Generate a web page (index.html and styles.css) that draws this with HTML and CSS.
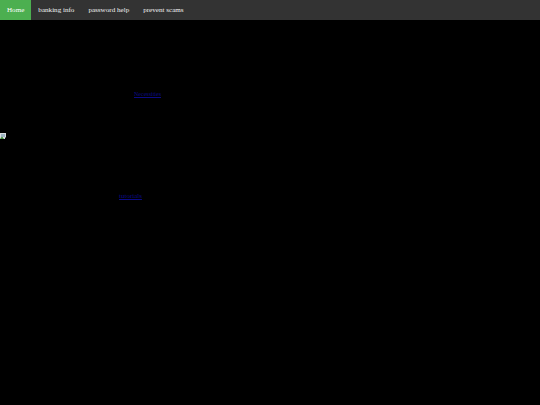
FILE: index.html
```html
<!DOCTYPE html>
<html lang="en">
<head>
    <meta charset="UTF-8">
    <meta name="viewport" content="width=device-width, initial-scale=1.0">
    <title>Home</title>
    <link rel="stylesheet" href="styles.css">
</head>
<body>
    <div class="topnav">
        <a class="active" href="#">Home</a>
        <a href="#">banking info</a>
        <a href="#">password help</a>
        <a href="#">prevent scams</a>
    </div>

    <div class="content">
        <p class="link-row necessities"><a href="#">Necessities</a></p>

        <div class="picture">
            <!-- broken picture placeholder -->
            <svg width="7" height="7" viewBox="0 0 7 7">
                <rect x="0" y="0" width="6" height="6" fill="#d8dde0"/>
                <rect x="1" y="1" width="4" height="3" fill="#9fb4c4"/>
                <path d="M0 6 L2 3.5 L4 6 Z" fill="#3f8a3a"/>
                <path d="M5 4 L7 6 L5 7 Z" fill="#000"/>
            </svg>
        </div>

        <p class="link-row tutorials"><a href="#">tutorials</a></p>
    </div>
</body>
</html>
```

FILE: styles.css
```css
body {
    margin: 0;
    background: #000;
    font-family: "Liberation Serif", "Times New Roman", serif;
}

.topnav {
    display: flex;
    background-color: #333;
    height: 20px;
    align-items: stretch;
}

.topnav a {
    display: flex;
    align-items: center;
    padding: 0 7px;
    color: #f2f2f2;
    font-size: 7.1px;
    text-decoration: none;
}

.topnav a.active {
    background-color: #4caf50;
    color: #fff;
}

.content {
    display: flex;
    flex-direction: column;
}

.link-row {
    margin: 0;
    line-height: 8px;
}

.link-row a {
    color: #0b0b86;
}

.necessities {
    margin-top: 70px;
    padding-left: 134px;
    font-size: 6px;
}

.picture {
    margin-top: 35px;
    height: 7px;
    line-height: 0;
}

.tutorials {
    margin-top: 52px;
    padding-left: 119px;
    font-size: 7px;
}
```
